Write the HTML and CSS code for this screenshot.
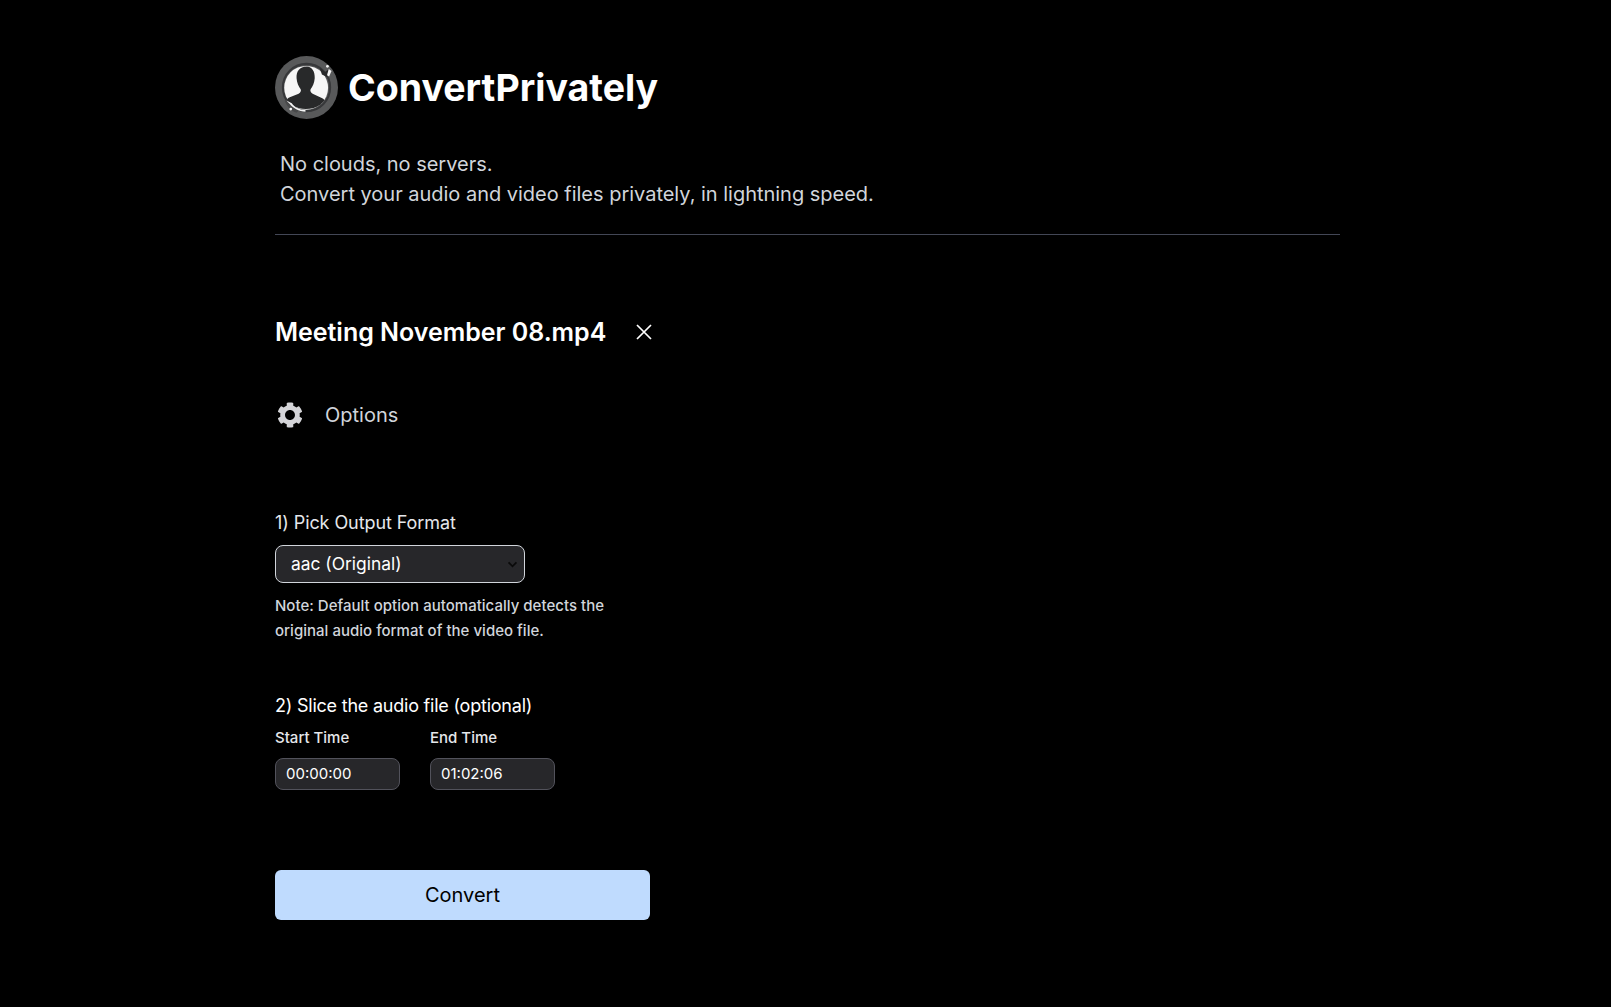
FILE: index.html
```html
<!DOCTYPE html>
<html lang="en">
<head>
<meta charset="utf-8">
<title>ConvertPrivately</title>
<link rel="stylesheet" href="styles.css">
</head>
<body>
<main class="page">
  <header class="brand">
    <svg class="logo" viewBox="27 22 184 184" aria-hidden="true">
      <circle cx="119" cy="114" r="92" fill="#58595a"/>
      <circle cx="119" cy="114" r="69" fill="none" stroke="#37383a" stroke-width="6"/>
      <circle cx="118" cy="115" r="64" fill="#f6f6f6"/>
      <path d="M120 53c-22 0-31 15-30 34 1 14 6 24 12 32 2 4 0 10-6 13l-24 10c-5 2-8 4-10 8l15 15c11 8 25 12 40 12s32-4 43-13l12-13c-2-3-6-5-10-7l-25-12c-6-3-8-9-6-13 6-8 11-18 12-32 1-19-8-34-23-34z" fill="#28292a"/>
      <path d="M158 57l15 12 11-8-5 22-15-7z" fill="#28292a"/>
      <circle cx="180" cy="52" r="4" fill="#f6f6f6"/>
      <path d="M184 60l8 6-7 16-6-4z" fill="#f6f6f6"/>
      <path d="M55 152l22 10c4 8 12 14 21 18l-8 8c-16-6-28-18-35-36z" fill="#48494a"/>
      <path d="M60 152l16 8c8 12 22 19 40 20v5c-20-1-36-10-47-24z" fill="#f6f6f6"/>
      <circle cx="73" cy="177" r="4" fill="#f6f6f6"/>
    </svg>
    <h1 class="brand-name">ConvertPrivately</h1>
  </header>
  <p class="tagline">No clouds, no servers.<br>Convert your audio and video files privately, in lightning speed.</p>
  <hr class="rule">
  <section class="file">
    <h2 class="file-name">Meeting November 08.mp4</h2>
    <svg class="close" viewBox="0 0 24 24" aria-hidden="true"><path d="M5 5l14 14M19 5L5 19"/></svg>
  </section>
  <section class="options">
    <svg class="gear" viewBox="0 0 512 512" aria-hidden="true"><path fill-rule="evenodd" d="M487.4 315.7l-42.6-24.6c4.3-23.2 4.3-47 0-70.2l42.6-24.6c4.9-2.8 7.1-8.6 5.5-14-11.1-35.6-30-67.8-54.7-94.6-3.8-4.1-10-5.1-14.8-2.3L380.8 110c-17.9-15.4-38.5-27.3-60.8-35.1V25.8c0-5.6-3.9-10.5-9.4-11.7-36.7-8.2-74.3-7.8-109.2 0-5.5 1.2-9.4 6.1-9.4 11.7V75c-22.2 7.9-42.8 19.8-60.8 35.1L88.7 85.5c-4.9-2.8-11-1.9-14.8 2.3-24.7 26.7-43.6 58.9-54.7 94.6-1.7 5.4.6 11.2 5.5 14L67.3 221c-4.3 23.2-4.3 47 0 70.2l-42.6 24.6c-4.9 2.8-7.1 8.6-5.5 14 11.1 35.6 30 67.8 54.7 94.6 3.8 4.1 10 5.1 14.8 2.3l42.6-24.6c17.9 15.4 38.5 27.3 60.8 35.1v49.2c0 5.6 3.9 10.5 9.4 11.7 36.7 8.2 74.3 7.8 109.2 0 5.5-1.2 9.4-6.1 9.4-11.7v-49.2c22.2-7.9 42.8-19.8 60.8-35.1l42.6 24.6c4.9 2.8 11 1.9 14.8-2.3 24.7-26.7 43.6-58.9 54.7-94.6 1.5-5.5-.7-11.3-5.6-14.1zM256 354c-54.1 0-98-43.9-98-98s43.9-98 98-98 98 43.9 98 98-43.9 98-98 98z"/></svg>
    <span class="options-label">Options</span>
  </section>
  <section class="format">
    <label class="step step-muted" for="fmt">1) Pick Output Format</label>
    <div class="select-wrap">
      <select id="fmt" class="select"><option>aac (Original)</option></select>
      <svg class="chevron" viewBox="0 0 12 8" aria-hidden="true"><path d="M1.5 1.5L6 6l4.5-4.5"/></svg>
    </div>
    <p class="note">Note: Default option automatically detects the original audio format of the video file.</p>
  </section>
  <section class="slice">
    <h3 class="step step-slice">2) Slice the audio file (optional)</h3>
    <div class="times">
      <div class="time">
        <label class="time-label" for="start">Start Time</label>
        <input id="start" class="time-input" type="text" value="00:00:00">
      </div>
      <div class="time">
        <label class="time-label" for="end">End Time</label>
        <input id="end" class="time-input" type="text" value="01:02:06">
      </div>
    </div>
  </section>
  <button class="convert" type="button">Convert</button>
</main>
</body>
</html>
```
FILE: styles.css
```css
* { box-sizing: border-box; }
html, body { margin: 0; background: #000; }
body { font-family: Inter, "Liberation Sans", sans-serif; color: #fff; min-height: 1007px; }
.page { width: 1065px; margin-left: 275px; padding-top: 56px; }
.brand { display: flex; align-items: center; gap: 10px; height: 63px; }
.logo { width: 63px; height: 63px; flex: none; }
.brand-name { margin: 0; font-size: 37.5px; line-height: 40px; font-weight: 700; }
.tagline { margin: 30px 0 0 5px; font-size: 20px; line-height: 30px; color: #d1d5db; letter-spacing: -0.015px; }
.rule { margin: 25px 0 0; border: 0; border-top: 1px solid #434756; }
.file { display: flex; align-items: center; margin-top: 81px; gap: 26px; }
.file-name { margin: 0; font-size: 25px; line-height: 32px; font-weight: 600; letter-spacing: -0.02px; }
.close { width: 24px; height: 24px; fill: none; stroke: #fff; stroke-width: 1.7; }
.options { display: flex; align-items: center; margin-top: 52px; height: 30px; }
.gear { width: 26px; height: 26px; margin-left: 2px; fill: #d4d4d8; }
.options-label { margin-left: 22px; font-size: 20px; line-height: 28px; color: #d1d5db; }
.format { margin-top: 79px; }
.step { display: block; margin: 0; font-size: 18px; line-height: 28px; font-weight: 400; color: #fff; }
.step-muted { color: #e5e7eb; letter-spacing: -0.08px; }
.step-slice { letter-spacing: -0.22px; }
.select-wrap { position: relative; width: 250px; margin-top: 8px; }
.select { display: block; width: 100%; height: 38px; padding: 0 15px 2px; appearance: none; background: #27272a; border: 1px solid #d1d5db; border-radius: 8px; color: #fff; font: 400 17.4px Inter, sans-serif; }
.chevron { position: absolute; right: 7px; top: 16px; width: 11px; height: 7px; fill: none; stroke: #0a0a0a; stroke-width: 2; pointer-events: none; }
.note { margin: 10px 0 0; width: 350px; font-size: 15px; line-height: 25px; font-weight: 500; color: #d1d5db; letter-spacing: 0.02px; }
.slice { margin-top: 49px; }
.times { display: flex; gap: 30px; margin-top: 8px; }
.time { display: flex; flex-direction: column; width: 125px; }
.time-label { font-size: 15px; line-height: 20px; font-weight: 500; color: #e5e7eb; }
.time-input { width: 125px; height: 32px; margin-top: 10px; padding: 0 10px 2px; background: #27272a; border: 1px solid #52525b; border-radius: 8px; color: #fff; font: 400 15px Inter, sans-serif; }
.convert { display: block; width: 375px; height: 50px; margin-top: 80px; background: #bfdbfe; border: 0; border-radius: 6px; color: #000; font: 400 20px Inter, sans-serif; }
```
